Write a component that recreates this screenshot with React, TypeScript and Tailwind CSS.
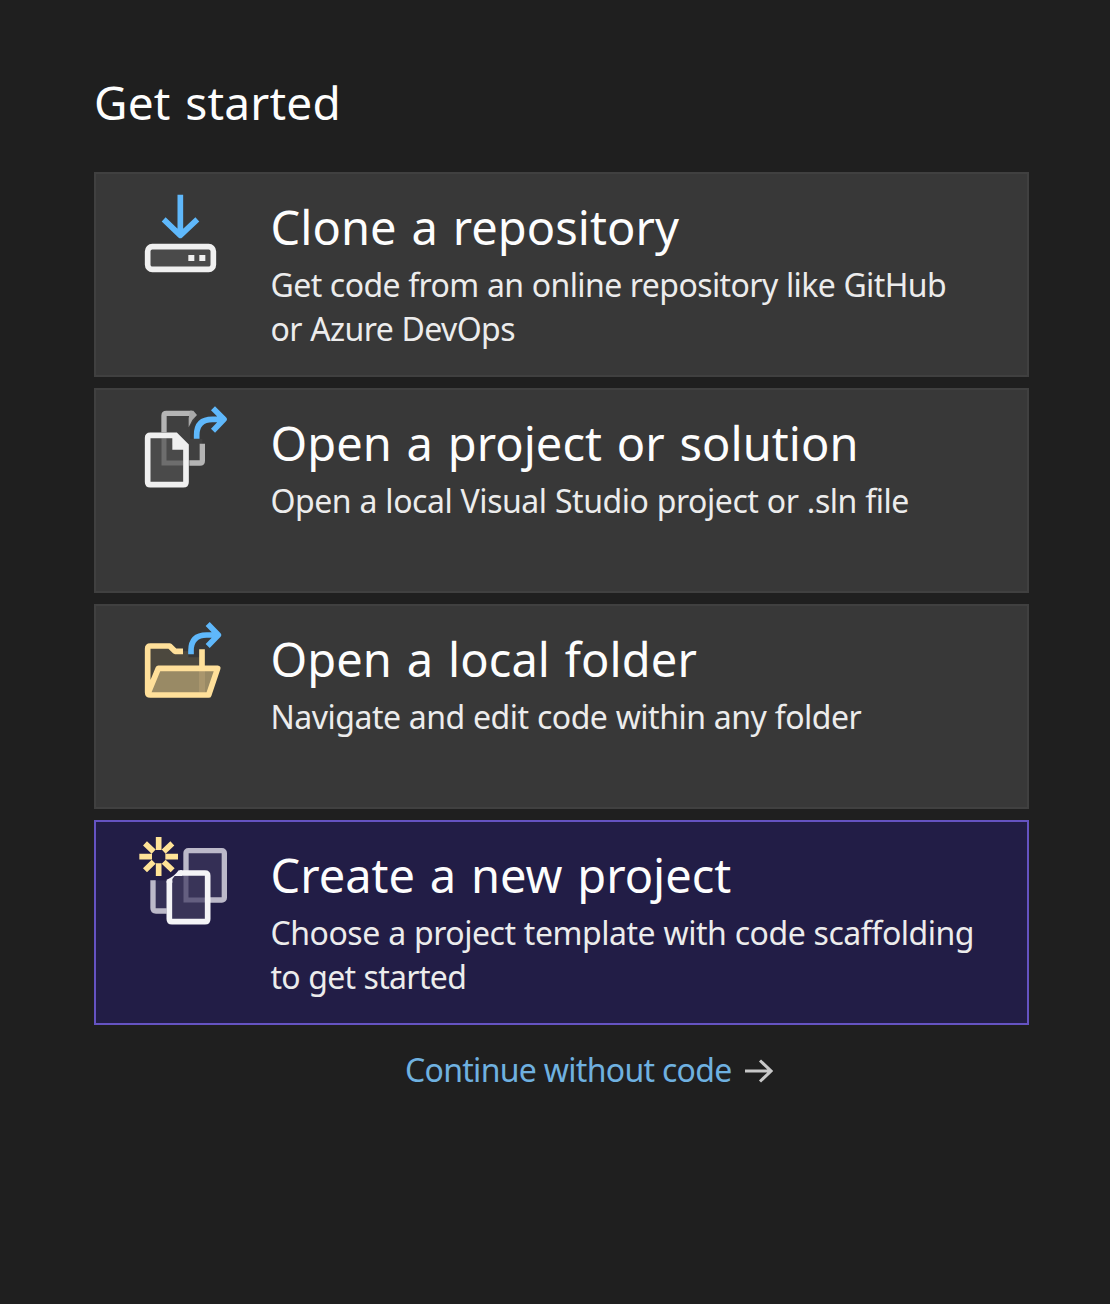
import type { ReactNode } from "react";

function CloneIcon() {
  return (
    <svg className="h-[110px] w-[110px]" viewBox="0 -9 330 330" fill="none">
      <path d="M151 44V164M101 118L151 166L202 118" stroke="#5fb8fb" strokeWidth="17" strokeLinejoin="round" />
      <rect x="53" y="200" width="197" height="68" rx="14" fill="#4a4a4a" stroke="#f0f0f0" strokeWidth="17" />
      <path d="M175 225h18v18h-18zM208 225h18v18h-18z" fill="#f0f0f0" />
    </svg>
  );
}

function ProjectIcon() {
  return (
    <svg className="h-[110px] w-[110px]" viewBox="0 -6 330 330" fill="none">
      <path d="M101 56H180L196 72L180 92V132H217V204H101Z" fill="#404040" />
      <path d="M102 112V62Q102 55 109 55H186M217 146V197Q217 204 210 204H178" stroke="#b4b4b4" strokeWidth="16" />
      <path d="M180 47H190L201 60L187 75L176 97V70Z" fill="#a9a9a9" />
      <path d="M60 121H134L168 156V269H53V129Q53 121 60 121Z" fill="#4a4a4a" />
      <path d="M102 130V204H160" stroke="#6d6d6d" strokeWidth="15" />
      <path d="M61 121H137L168 152V261Q168 269 160 269H61Q53 269 53 261V129Q53 121 61 121Z" stroke="#f0f0f0" strokeWidth="17" />
      <path d="M127 121H140L168 150V164H127Z" fill="#f0f0f0" />
      <path d="M200 131V120Q200 73 247 73H276M249 40L282 73L249 107" stroke="#5fb8fb" strokeWidth="17" strokeLinejoin="round" />
    </svg>
  );
}

function FolderIcon() {
  return (
    <svg className="h-[110px] w-[110px]" viewBox="0 -3 330 330" fill="none">
      <path d="M53 108H121L137 124H175V142H216V176H82L53 240Z" fill="#4c483e" />
      <path d="M82 175H265L238 255H55Z" fill="#998a65" />
      <path d="M207 182H225V247H207Z" fill="#a9966d" />
      <path d="M159 124H135L119 108H61Q53 108 53 116V247Q53 255 61 255H236L263 175H85L55 248M216 118V172" stroke="#ffe09a" strokeWidth="17" strokeLinejoin="round" />
      <path d="M183 133V122Q183 75 230 75H259M233 42L265 75L233 108" stroke="#5fb8fb" strokeWidth="17" strokeLinejoin="round" />
    </svg>
  );
}

function NewProjectIcon() {
  return (
    <svg className="h-[110px] w-[110px]" viewBox="0 0 330 330" fill="none">
      <path d="M70 166H110V258H70Z" fill="#342f55" />
      <path d="M69 166V249Q69 258 78 258H110" stroke="#bcb9c9" strokeWidth="16" />
      <rect x="168" y="77" width="115" height="148" rx="7" fill="#342f55" stroke="#bcb9c9" strokeWidth="16" />
      <path d="M156 136L118 160V290H233V144H156Z" fill="#393458" />
      <path d="M168 150V225H228" stroke="#645f80" strokeWidth="15" />
      <path d="M150 144H225Q233 144 233 152V282Q233 290 225 290H126Q118 290 118 282V168" stroke="#f4f4f7" strokeWidth="17" />
      <path d="M146 136H156V153H134L127 162V173H110V164Q132 156 146 136Z" fill="#f4f4f7" />
      <path d="M86 36V75M86 115V153M28 95H66M106 95H144M45 55L71 80M101 110L128 136M127 55L101 80M71 110L45 136" stroke="#ffe397" strokeWidth="17" />
    </svg>
  );
}

type CardProps = {
  icon: ReactNode;
  title: string;
  titleClass: string;
  lines: { text: string; className: string }[];
  selected?: boolean;
};

function ActionCard({ icon, title, titleClass, lines, selected }: CardProps) {
  return (
    <button
      className={`flex h-[205px] w-full items-start border-2 pl-[34px] pt-[3px] text-left ${
        selected ? "border-[#6553c2] bg-[#221d46]" : "border-[#404040] bg-[#383838]"
      }`}
    >
      <span className="shrink-0">{icon}</span>
      <span className="flex flex-col pl-[30.5px] pt-[18px] whitespace-nowrap">
        <span className={`text-[47px] leading-[64px] text-[#fdfdfd] [word-spacing:2.5px] ${titleClass}`}>{title}</span>
        <span className="flex flex-col pt-1 text-[32px] leading-[44px] text-[#ececec] [word-spacing:0.5px]">
          {lines.map((l) => (
            <span key={l.text} className={l.className}>{l.text}</span>
          ))}
        </span>
      </span>
    </button>
  );
}

export default function App() {
  return (
    <main className="h-[1304px] w-[1110px] bg-[#1f1f1f] pl-[94px] pt-[70px] font-['Noto_Sans',sans-serif]">
      <h1 className="h-[102px] text-[46px] leading-[64px] tracking-[0.2px] [word-spacing:2.5px] text-[#fdfdfd] whitespace-nowrap">Get started</h1>
      <div className="flex w-[935px] flex-col gap-[11px]">
        <ActionCard
          icon={<CloneIcon />}
          title="Clone a repository"
          titleClass="tracking-[0.07px]"
          lines={[
            { text: "Get code from an online repository like GitHub", className: "tracking-[-0.59px]" },
            { text: "or Azure DevOps", className: "tracking-[-0.58px]" },
          ]}
        />
        <ActionCard
          icon={<ProjectIcon />}
          title="Open a project or solution"
          titleClass="tracking-[0.04px]"
          lines={[{ text: "Open a local Visual Studio project or .sln file", className: "tracking-[-0.46px]" }]}
        />
        <ActionCard
          icon={<FolderIcon />}
          title="Open a local folder"
          titleClass="tracking-[0.08px]"
          lines={[{ text: "Navigate and edit code within any folder", className: "tracking-[-0.5px]" }]}
        />
        <ActionCard
          selected
          icon={<NewProjectIcon />}
          title="Create a new project"
          titleClass="tracking-[0.01px]"
          lines={[
            { text: "Choose a project template with code scaffolding", className: "tracking-[-0.47px]" },
            { text: "to get started", className: "tracking-[-0.68px]" },
          ]}
        />
      </div>
      <a className="flex items-center pl-[311px] pt-[23px] text-[32px] leading-[44px] text-[#6fb1e0] whitespace-nowrap">
        <span className="tracking-[-0.7px]">Continue without code</span>
        <svg className="ml-[13px] mt-0.5 h-[24px] w-[28px]" viewBox="0 0 28 24" fill="none" stroke="#c8c8c8" strokeWidth="3">
          <path d="M0 12H26M15 1.500L26 12L15 22.500" />
        </svg>
      </a>
    </main>
  );
}
